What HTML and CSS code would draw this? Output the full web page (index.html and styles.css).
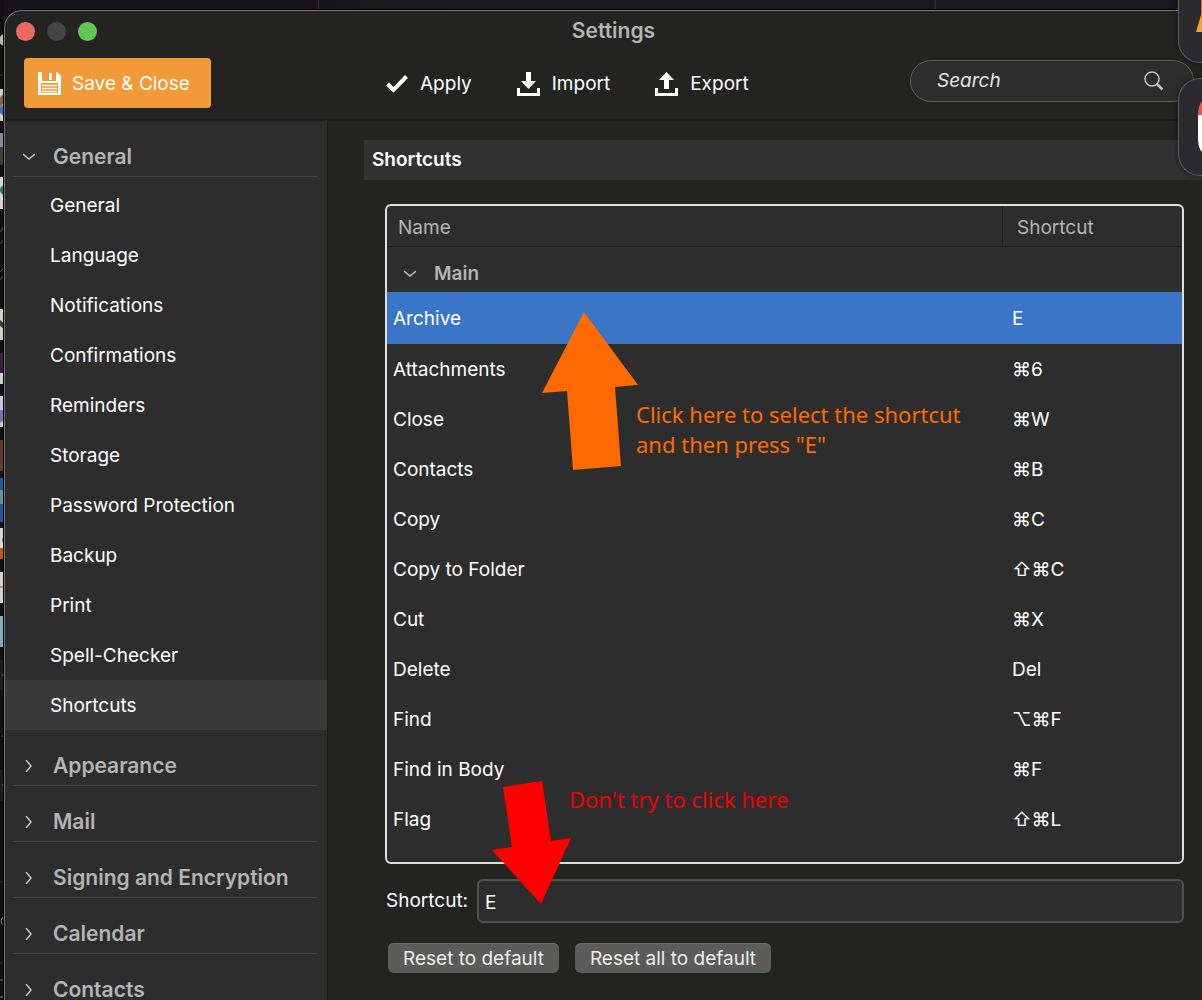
FILE: index.html
```html
<!DOCTYPE html>
<html lang="en">
  <head>
    <meta charset="utf-8">
    <title>Settings</title>
    <link rel="stylesheet" href="styles.css">
  </head>
  <body>
    <!-- Window behind -->
    <div class="tab-line tab-line-left"></div>
    <div class="tab-line tab-line-right"></div>
    <svg class="behind" width="4" height="1000" viewBox="0 0 4 1000" aria-hidden="true">
      <rect width="4" height="1000" fill="#101013"/>
      <circle cx="5" cy="40" r="6" fill="#b9b9b9"/>
      <path d="M0 75h4M0 882h4M0 963h4" stroke="#2b2b2f"/>
      <rect y="89" width="4" height="32" fill="#d0d0d0"/>
      <path d="M0 98l4-6v10l-4 6z" fill="#8c6048"/>
      <path d="M0 108l4-4v12l-4-3z" fill="#3f6ec0"/>
      <rect y="133" width="4" height="32" fill="#3f403c"/>
      <rect y="133" width="4" height="14" fill="#7c8ea0"/>
      <rect y="177" width="4" height="32" fill="#d6d6d2"/>
      <circle cx="5" cy="190" r="5" fill="#247a5c"/>
      <path d="M0 232l4-6M0 244l4-5M0 272l4-4M0 280l4-5" stroke="#55565a"/>
      <rect y="309" width="4" height="31" fill="#d2cfc8"/>
      <path d="M0 320l4 3v6l-4-3z" fill="#4c3a30"/>
      <rect y="353" width="4" height="31" fill="#cfcfd2"/>
      <rect y="353" width="4" height="20" fill="#47164f"/>
      <rect y="396" width="4" height="31" fill="#c9cad6"/>
      <path d="M0 410h4v10l-4 3z" fill="#7272b8"/>
      <rect y="440" width="4" height="31" fill="#6b3c25"/>
      <rect y="478" width="4" height="44" fill="#1c5aa4"/>
      <rect y="490" width="4" height="14" fill="#6a9397"/>
      <rect y="528" width="4" height="31" fill="#dad8d4"/>
      <path d="M0 548h4v11H0z" fill="#cd4f1c"/>
      <circle cx="5" cy="540" r="3" fill="#cd4f1c"/>
      <rect y="572" width="4" height="31" fill="#d4d4d2"/>
      <path d="M0 587h4" stroke="#a4583c"/>
      <rect y="616" width="4" height="31" fill="#86aac0"/>
      <path d="M0 660h4v30H0zM0 770h4v31H0z" fill="#1c1c20"/>
      <circle cx="5" cy="921" r="4" fill="none" stroke="#77787c"/>
      <path d="M2 736h2M2 675h2M2 785h2M0 980h4M0 997h4" stroke="#77787c"/>
    </svg>

    <div class="window">
      <header class="titlebar">
        <span class="light red"></span>
        <span class="light gray"></span>
        <span class="light green"></span>
        <h1>Settings</h1>
      </header>

      <div class="toolbar">
        <button class="save">
          <svg width="23" height="23" viewBox="0 0 23 23">
            <path d="M0 0h4v9h14V0h1l4 4v19H0z" fill="#fff"/>
            <rect x="11" y="1" width="3" height="7" fill="#fff"/>
            <rect x="3" y="11" width="17" height="10" fill="#f29a37"/>
            <path d="M4 13.500h15M4 16.500h15M4 19.500h15" stroke="#fff" stroke-width="1.500"/>
          </svg>
          Save &amp; Close
        </button>
        <div class="actions">
          <button>
            <svg width="22" height="22" viewBox="0 0 22 22">
              <path d="M1.500 11l6 6L20.500 3.500" fill="none" stroke="#fff" stroke-width="4"/>
            </svg>
            Apply
          </button>
          <button>
            <svg width="23" height="24" viewBox="0 0 23 24">
              <path d="M9 0h5v9h5l-7.500 8L4 9h5z" fill="#fff"/>
              <path d="M1.500 16v6.500h20V16" fill="none" stroke="#fff" stroke-width="3"/>
            </svg>
            Import
          </button>
          <button>
            <svg width="23" height="24" viewBox="0 0 23 24">
              <path d="M9 17h5V8h5L11.500 0 4 8h5z" fill="#fff"/>
              <path d="M1.500 16v6.500h20V16" fill="none" stroke="#fff" stroke-width="3"/>
            </svg>
            Export
          </button>
        </div>
        <div class="search">
          <input type="text" placeholder="Search" aria-label="Search">
          <svg width="20" height="20" viewBox="0 0 20 20" fill="none" stroke="#c4c4c4">
            <circle cx="8" cy="8" r="7" stroke-width="1.500"/>
            <path d="M13 13l5.500 5.500" stroke-width="2.500"/>
          </svg>
        </div>
      </div>

      <div class="content">
        <nav class="sidebar">
          <h2 class="group"><svg class="chevron" width="12" height="12" viewBox="0 0 12 12"><path d="M0 3l6 5 6-5"/></svg>General</h2>
          <ul>
            <li><a href="#general">General</a></li>
            <li><a href="#language">Language</a></li>
            <li><a href="#notifications">Notifications</a></li>
            <li><a href="#confirmations">Confirmations</a></li>
            <li><a href="#reminders">Reminders</a></li>
            <li><a href="#storage">Storage</a></li>
            <li><a href="#password">Password Protection</a></li>
            <li><a href="#backup">Backup</a></li>
            <li><a href="#print">Print</a></li>
            <li><a href="#spell">Spell-Checker</a></li>
            <li><a href="#shortcuts" class="active">Shortcuts</a></li>
          </ul>
          <h2 class="group"><svg class="chevron" width="12" height="12" viewBox="0 0 12 12"><path d="M3 0l5 6-5 6"/></svg>Appearance</h2>
          <h2 class="group"><svg class="chevron" width="12" height="12" viewBox="0 0 12 12"><path d="M3 0l5 6-5 6"/></svg>Mail</h2>
          <h2 class="group"><svg class="chevron" width="12" height="12" viewBox="0 0 12 12"><path d="M3 0l5 6-5 6"/></svg>Signing and Encryption</h2>
          <h2 class="group"><svg class="chevron" width="12" height="12" viewBox="0 0 12 12"><path d="M3 0l5 6-5 6"/></svg>Calendar</h2>
          <h2 class="group"><svg class="chevron" width="12" height="12" viewBox="0 0 12 12"><path d="M3 0l5 6-5 6"/></svg>Contacts</h2>
        </nav>

        <main>
          <h2 class="section-title">Shortcuts</h2>
          <div class="panel">
            <div class="table-box">
              <table>
                <thead>
                  <tr><th>Name</th><th class="key">Shortcut</th></tr>
                </thead>
                <tbody>
                  <tr class="main-row"><td colspan="2"><svg class="chevron" width="12" height="12" viewBox="0 0 12 12"><path d="M0 3l6 5 6-5"/></svg>Main</td></tr>
                  <tr class="selected"><td>Archive</td><td>E</td></tr>
                  <tr><td>Attachments</td><td>⌘6</td></tr>
                  <tr><td>Close</td><td>⌘W</td></tr>
                  <tr><td>Contacts</td><td>⌘B</td></tr>
                  <tr><td>Copy</td><td>⌘C</td></tr>
                  <tr><td>Copy to Folder</td><td>⇧⌘C</td></tr>
                  <tr><td>Cut</td><td>⌘X</td></tr>
                  <tr><td>Delete</td><td>Del</td></tr>
                  <tr><td>Find</td><td>⌥⌘F</td></tr>
                  <tr><td>Find in Body</td><td>⌘F</td></tr>
                  <tr><td>Flag</td><td>⇧⌘L</td></tr>
                </tbody>
              </table>
            </div>

            <div class="field">
              <label for="shortcut">Shortcut:</label>
              <input type="text" id="shortcut" value="E">
            </div>
            <div class="buttons">
              <button>Reset to default</button>
              <button>Reset all to default</button>
            </div>

            <!-- Notes on top of the panel -->
            <svg class="arrow-up" width="97" height="160" viewBox="0 0 97 160">
              <path d="M42 1l54 73-23 2 6 79-48 4-6-79-25 2z" fill="#ff6a00"/>
            </svg>
            <p class="note note-select">Click here to select the shortcut<br>and then press "E"</p>
            <svg class="arrow-down" width="80" height="124" viewBox="0 0 80 124">
              <path d="M11 6L50 0l9 60 20-3-30 66L0 69l20-3z" fill="#ff0000"/>
            </svg>
            <p class="note note-avoid">Don't try to click here</p>
          </div>
        </main>
      </div>
    </div>

    <!-- Desktop widgets at the right edge -->
    <div class="widget widget-top">
      <svg width="6" height="33" viewBox="0 0 6 33"><path d="M6 12v20H0z" fill="#f7a236"/><path d="M5 0h1v14H5z" fill="#c47a2c"/></svg>
    </div>
    <div class="widget widget-bottom">
      <svg width="4" height="52" viewBox="0 0 4 52"><path d="M4 0Q0 5 0 14h4z" fill="#e2564d"/><path d="M0 14h4v37Q0 47 0 38z" fill="#fff"/></svg>
    </div>
  </body>
</html>
```
FILE: styles.css
```css
* {
  box-sizing: border-box;
}

body, h1, h2, ul, p {
  margin: 0;
  padding: 0;
}

body {
  position: relative;
  display: flex;
  height: 100vh;
  overflow: hidden;
  background: linear-gradient(90deg, #17151b 26%, #171a1f 40%);
  font-family: Inter, "Liberation Sans", sans-serif;
  font-size: 19px;
  line-height: 24px;
  color: #fff;
}

button, input {
  font: inherit;
  color: inherit;
}

svg {
  flex: none;
}

/* Window behind */
.behind {
  display: block;
}

.tab-line {
  position: absolute;
  top: 0;
  width: 1px;
  height: 9px;
  background: #34343a;
}

.tab-line-left {
  left: 318px;
}

.tab-line-right {
  left: 935px;
}

/* Settings window, open at the right side of the screen */
.window {
  flex: 1;
  display: flex;
  flex-direction: column;
  min-width: 0;
  margin-top: 10px;
  border: 1px solid #737373;
  border-width: 1px 0 0 1px;
  border-radius: 18px 0 0 0;
  background: #232422;
  box-shadow: 0 0 0 1px #000;
  overflow: hidden;
}

.titlebar {
  display: flex;
  align-items: center;
  gap: 12px;
  height: 40px;
  padding-left: 11px;
  position: relative;
}

.titlebar h1 {
  position: absolute;
  left: 20px;
  right: 0;
  text-align: center;
  font-size: 21px;
  font-weight: 600;
  color: #b4b4b4;
}

.light {
  width: 19px;
  height: 19px;
  border-radius: 50%;
}

.red {
  background: #ed6a5f;
}

.gray {
  background: #444;
}

.green {
  background: #62c655;
}

/* Toolbar */
.toolbar {
  display: flex;
  align-items: flex-start;
  height: 70px;
  padding: 7px 8px 0 19px;
  border-bottom: 2px solid #1b1c1a;
}

.toolbar button {
  display: flex;
  align-items: center;
  gap: 12px;
  height: 50px;
  padding: 1px 0 0;
  border: none;
  background: none;
}

.toolbar .save {
  width: 187px;
  padding-left: 14px;
  gap: 11px;
  border-radius: 4px;
  background: #f29a37;
}

.actions {
  display: flex;
  gap: 45px;
  margin-left: 175px;
}

.search {
  display: flex;
  align-items: center;
  width: 284px;
  height: 42px;
  margin: 2px 0 0 auto;
  padding: 0 29px 0 26px;
  border: 1px solid #5c5c5c;
  border-radius: 21px;
  background: #2d2d2d;
}

.search input {
  flex: 1;
  min-width: 0;
  padding: 0;
  border: none;
  outline: none;
  background: none;
  font-style: italic;
}

.search input::placeholder {
  color: #e6e6e6;
}

/* Sidebar */
.content {
  flex: 1;
  display: flex;
  min-height: 0;
}

.sidebar {
  flex: none;
  width: 323px;
  border-right: 1px solid #1b1c1a;
  background: #2d2d2d;
  overflow: hidden;
}

.group {
  display: flex;
  align-items: center;
  gap: 18px;
  height: 56px;
  margin: 0 9px 0 8px;
  padding: 17px 0 0 10px;
  border-bottom: 1px solid #444;
  font-size: 21px;
  font-weight: 600;
  color: #b4b4b4;
}

.chevron {
  fill: none;
  stroke: #c4c4c4;
  stroke-width: 1.5;
}

.sidebar ul {
  padding-top: 3px;
  list-style: none;
}

.sidebar a {
  display: block;
  padding: 14px 45px 12px;
  color: #fff;
  text-decoration: none;
}

.sidebar a.active {
  background: #3a3a3a;
}

/* Shortcuts page */
main {
  flex: 1;
  min-width: 0;
  padding: 19px 0 0 36px;
}

.section-title {
  padding: 8px;
  background: #313131;
  font-size: 19px;
  font-weight: 600;
}

.panel {
  position: relative;
  margin: 24px 18px 0 21px;
}

.table-box {
  height: 660px;
  border: 2px solid #dedede;
  border-radius: 6px;
  background: #2d2d2d;
  overflow: hidden;
}

table {
  width: 100%;
  border-collapse: separate;
  border-spacing: 0;
}

th {
  height: 41px;
  padding: 4px 11px 0;
  border-bottom: 1px solid #1f1f1f;
  text-align: left;
  font-weight: 400;
  color: #b4b4b4;
}

th.key {
  width: 180px;
  padding-left: 14px;
  border-left: 1px solid #1f1f1f;
}

td {
  height: 50px;
  padding: 2px 0 0 6px;
}

td + td {
  padding-left: 10px;
}

.main-row td {
  height: 45px;
  padding: 8px 0 0 17px;
  font-weight: 600;
  color: #b4b4b4;
}

.main-row .chevron {
  margin-right: 18px;
}

.selected td {
  height: 52px;
  background: #3b75c8;
}

.field {
  display: flex;
  align-items: center;
  gap: 9px;
  margin: 15px 0 0 1px;
}

.field input {
  flex: 1;
  height: 44px;
  padding: 2px 6px 0;
  border: 2px solid #505050;
  border-radius: 6px;
  background: #2d2d2d;
}

.buttons {
  display: flex;
  gap: 16px;
  margin: 20px 0 0 3px;
}

.buttons button {
  height: 30px;
  padding: 1px 15px 0;
  border: none;
  border-radius: 6px;
  background: #5b5c5a;
  box-shadow: inset 0 1px #6b6c6a;
  color: #eee;
}

/* Notes */
.note {
  position: absolute;
  font-family: "Noto Sans", "Open Sans", sans-serif;
  font-size: 22px;
  line-height: 30px;
  white-space: nowrap;
}

.note-select {
  left: 251px;
  top: 195px;
  color: #ff6a00;
}

.note-avoid {
  left: 184px;
  top: 580px;
  color: #f00000;
}

.arrow-up {
  position: absolute;
  left: 157px;
  top: 107px;
}

.arrow-down {
  position: absolute;
  left: 107px;
  top: 577px;
}

/* Desktop widgets */
.widget {
  position: absolute;
  right: 0;
  width: 24px;
  height: 98px;
  border: 1px solid #5e5e60;
  border-right: none;
  border-radius: 22px 0 0 22px;
  background: #2a2a2f;
  box-shadow: 0 0 6px rgba(0, 0, 0, 0.5);
}

.widget-top {
  top: -35px;
  padding: 34px 0 0 17px;
}

.widget-bottom {
  top: 78px;
  padding: 22px 0 0 19px;
}
```
